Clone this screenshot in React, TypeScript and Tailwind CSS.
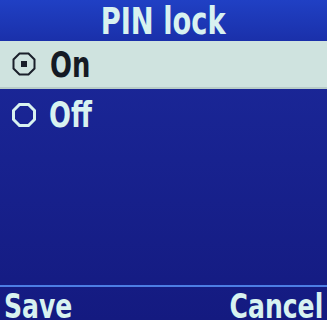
import React from "react";

function Radio({ checked, dark }: { checked: boolean; dark: boolean }) {
  const c = dark ? "#1a1f2a" : "#d8f2f0";
  return (
    <svg width="26" height="26" viewBox="0 0 26 26" className="shrink-0">
      <polygon
        points="8.5,2.5 17.5,2.5 23.5,8.5 23.5,17.5 17.5,23.5 8.5,23.5 2.5,17.5 2.5,8.5"
        fill="none"
        stroke={c}
        strokeWidth={dark ? 2 : 3}
      />
      {checked && <rect x="10" y="10" width="6" height="6" fill={c} />}
    </svg>
  );
}

export default function App() {
  return (
    <div
      className="w-[327px] h-[320px] overflow-hidden flex flex-col bg-gradient-to-b from-[#1c2a9e] to-[#141a80] text-[#d8f2f0]"
      style={{ fontFamily: '"DejaVu Sans Condensed", "DejaVu Sans", sans-serif' }}
    >
      <div className="h-[41px] flex items-center justify-center bg-gradient-to-b from-[#2040c4] to-[#1a30aa] pt-[2px]">
        <span className="inline-block font-bold leading-none scale-x-[0.82] text-[37px]">PIN lock</span>
      </div>
      <div className="h-[48px] flex items-center pl-[11px] bg-[#cfe3df] text-[#141a24] border-b-2 border-[#b8ccc8]">
        <Radio checked dark />
        <span className="ml-[13px] origin-left inline-block font-bold leading-none scale-x-[0.82] text-[35px] translate-y-[1px]">On</span>
      </div>
      <div className="h-[52px] flex items-center pl-[11px]">
        <Radio checked={false} dark={false} />
        <span className="ml-[12px] origin-left inline-block font-bold leading-none scale-x-[0.82] text-[35px]">Off</span>
      </div>
      <div className="flex-1" />
      <div className="h-[2px] bg-[#4c7ee4]" />
      <div className="h-[33px] flex items-end justify-between px-[4px]">
        <span className="origin-left inline-block font-bold leading-none scale-x-[0.82] text-[34px] translate-y-[3px]">Save</span>
        <span className="origin-right inline-block font-bold leading-none scale-x-[0.82] text-[34px] translate-y-[3px]">Cancel</span>
      </div>
    </div>
  );
}
